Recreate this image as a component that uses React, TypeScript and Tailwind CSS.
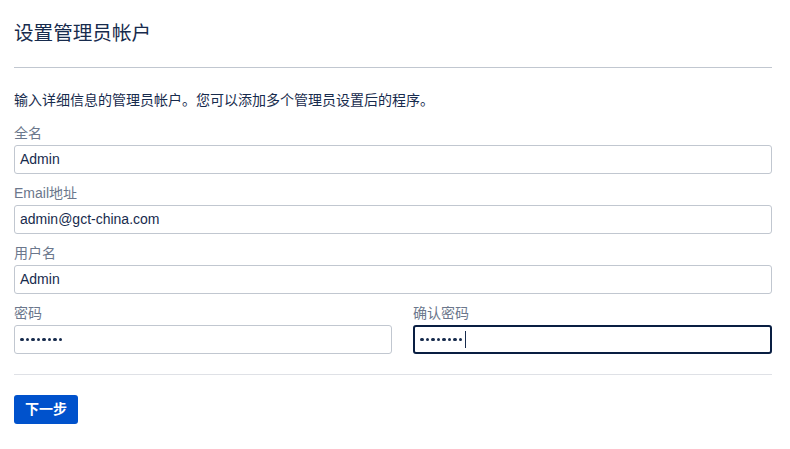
import React from "react";

const font = {
  fontFamily: '"Liberation Sans", "Noto Sans CJK SC", sans-serif',
};

type FieldProps = {
  label: string;
  value: string;
  focused?: boolean;
  password?: boolean;
};

const Field = ({ label, value, focused, password }: FieldProps) => {
  return (
    <div className="flex flex-col">
      <div className="text-[14px] leading-[20px] text-[#6b778c] mb-[2px]">{label}</div>
      <div
        className={`h-[29px] flex items-center px-[5px] rounded-[3px] bg-white ${
          focused ? "border-2 border-[#091e42]" : "border border-[#c1c7d0]"
        }`}
      >
        {password ? (
          <span className="flex items-center gap-[2px]">
            {Array(8)
              .fill(null)
              .map((_, i) => (
                <span key={i} className="w-[3.5px] h-[3.5px] rounded-full bg-[#172b4d]" />
              ))}
            {focused && <span className="w-px h-[17px] bg-[#172b4d] ml-px" />}
          </span>
        ) : (
          <span className="text-[14px] text-[#172b4d]">{value}</span>
        )}
      </div>
    </div>
  );
};

export default function App() {
  return (
    <div className="w-[790px] h-[449px] bg-white text-[#172b4d]" style={font}>
      <div className="pl-[14px] pr-[18px]">
        <h1 className="text-[19.6px] leading-[24px] pt-[21px] text-[#172b4d]">设置管理员帐户</h1>
        <div className="h-px bg-[#c1c7d0] mt-[22px]" />
        <p className="text-[14px] leading-[20px] mt-[22px] text-[#172b4d]">
          输入详细信息的管理员帐户。您可以添加多个管理员设置后的程序。
        </p>
        <div className="mt-[13px] flex flex-col gap-[9px]">
          <Field label="全名" value="Admin" />
          <Field label="Email地址" value="admin@gct-china.com" />
          <Field label="用户名" value="Admin" />
          <div className="grid grid-cols-[378px_1fr] gap-[21px]">
            <Field label="密码" value="" password />
            <Field label="确认密码" value="" password focused />
          </div>
        </div>
        <div className="h-px bg-[#dfe1e6] mt-[20px]" />
        <button className="mt-[20px] h-[29px] w-[64px] rounded-[3px] bg-[#0052cc] text-white text-[14px] font-bold">
          下一步
        </button>
      </div>
    </div>
  );
}
